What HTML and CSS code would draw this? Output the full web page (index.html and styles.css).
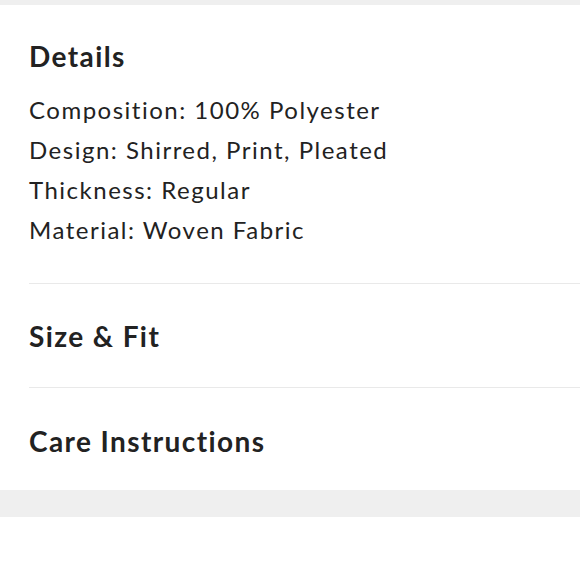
FILE: index.html
```html
<!DOCTYPE html>
<html>
<head>
<meta charset="utf-8">
<link rel="stylesheet" href="styles.css">
</head>
<body>
<div class="band band-top"></div>
<div class="panel">
  <section class="item item-open">
    <h2 class="item-title">Details</h2>
    <ul class="specs">
      <li>Composition: 100% Polyester</li>
      <li>Design: Shirred, Print, Pleated</li>
      <li>Thickness: Regular</li>
      <li>Material: Woven Fabric</li>
    </ul>
  </section>
  <section class="item">
    <h2 class="item-title">Size &amp; Fit</h2>
  </section>
  <section class="item item-last">
    <h2 class="item-title">Care Instructions</h2>
  </section>
</div>
<div class="band band-bottom"></div>
</body>
</html>
```
FILE: styles.css
```css
html, body {
  margin: 0;
  padding: 0;
  background: #ffffff;
  font-family: Lato, "Noto Sans", sans-serif;
  color: #222222;
}
.band {
  background: #efefef;
}
.band-top {
  height: 5px;
}
.band-bottom {
  height: 27px;
}
.panel {
  padding-left: 29px;
}
.item {
  padding: 35px 0 34px;
  border-bottom: 1px solid #e9e9e9;
}
.item-open {
  padding-top: 34px;
  padding-bottom: 33px;
}
.item-last {
  border-bottom: none;
  padding-top: 36px;
  padding-bottom: 32px;
}
.item-title {
  margin: 0;
  font-size: 28px;
  line-height: 34px;
  font-weight: 700;
  letter-spacing: 1.4px;
}
.specs {
  list-style: none;
  margin: 17px 0 0;
  padding: 0;
  font-size: 24px;
  line-height: 40px;
  font-weight: 400;
  letter-spacing: 1.5px;
}
```
